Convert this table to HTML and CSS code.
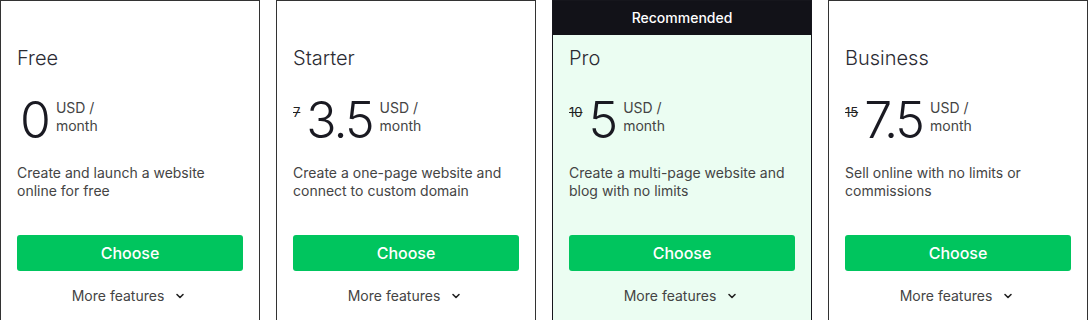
FILE: index.html
```html
<!DOCTYPE html>
<html lang="en">
<head>
    <meta charset="UTF-8">
    <meta name="viewport" content="width=device-width, initial-scale=1.0">
    <title>Plans</title>
    <link rel="stylesheet" href="styles.css">
</head>
<body>
    <div class="plans">
        <div class="plan">
            <div class="badge"></div>
            <div class="plan-body">
                <h2>Free</h2>
                <div class="price">
                    <span class="amount">0</span>
                    <span class="unit">USD /<br>month</span>
                </div>
                <p class="desc">Create and launch a website online for free</p>
                <button class="choose">Choose</button>
                <div class="more">More features <svg width="16" height="16" viewBox="0 0 16 16"><path d="M5 6.5l3 3 3-3" fill="none" stroke="#222" stroke-width="1.6" stroke-linecap="round" stroke-linejoin="round"/></svg></div>
            </div>
        </div>
        <div class="plan">
            <div class="badge"></div>
            <div class="plan-body">
                <h2>Starter</h2>
                <div class="price">
                    <s class="old">7</s>
                    <span class="amount">3.5</span>
                    <span class="unit">USD /<br>month</span>
                </div>
                <p class="desc">Create a one-page website and connect to custom domain</p>
                <button class="choose">Choose</button>
                <div class="more">More features <svg width="16" height="16" viewBox="0 0 16 16"><path d="M5 6.5l3 3 3-3" fill="none" stroke="#222" stroke-width="1.6" stroke-linecap="round" stroke-linejoin="round"/></svg></div>
            </div>
        </div>
        <div class="plan featured">
            <div class="badge">Recommended</div>
            <div class="plan-body">
                <h2>Pro</h2>
                <div class="price">
                    <s class="old">10</s>
                    <span class="amount">5</span>
                    <span class="unit">USD /<br>month</span>
                </div>
                <p class="desc">Create a multi-page website and blog with no limits</p>
                <button class="choose">Choose</button>
                <div class="more">More features <svg width="16" height="16" viewBox="0 0 16 16"><path d="M5 6.5l3 3 3-3" fill="none" stroke="#222" stroke-width="1.6" stroke-linecap="round" stroke-linejoin="round"/></svg></div>
            </div>
        </div>
        <div class="plan">
            <div class="badge"></div>
            <div class="plan-body">
                <h2>Business</h2>
                <div class="price">
                    <s class="old">15</s>
                    <span class="amount">7.5</span>
                    <span class="unit">USD /<br>month</span>
                </div>
                <p class="desc">Sell online with no limits or commissions</p>
                <button class="choose">Choose</button>
                <div class="more">More features <svg width="16" height="16" viewBox="0 0 16 16"><path d="M5 6.5l3 3 3-3" fill="none" stroke="#222" stroke-width="1.6" stroke-linecap="round" stroke-linejoin="round"/></svg></div>
            </div>
        </div>
    </div>
</body>
</html>
```

FILE: styles.css
```css
body {
    margin: 0;
    font-family: Inter, "Noto Sans", sans-serif;
    color: #2b2b33;
    background: #fff;
    overflow: hidden;
}
.plans {
    display: flex;
    gap: 16px;
}
.plan {
    width: 260px;
    height: 320px;
    box-sizing: border-box;
    border: 1px solid #333;
    border-bottom: none;
    background: #fff;
}
.plan.featured {
    background: #ebfdf2;
    border-color: #16161c;
}
.badge {
    height: 34px;
    line-height: 34px;
    text-align: center;
    font-size: 14px;
    font-weight: 500;
    color: #fff;
}
.featured .badge {
    background: #121218;
}
.plan-body {
    padding: 11px 16px 0;
}
.plan-body h2 {
    margin: 0;
    font-size: 20px;
    font-weight: 300;
    line-height: 24px;
    color: #2b2b33;
}
.price {
    display: flex;
    align-items: flex-start;
    margin-top: 25px;
    height: 50px;
}
.old {
    font-size: 13px;
    line-height: 14px;
    margin-top: 10px;
    margin-right: 3px;
    color: #222;
}
.amount {
    font-size: 50px;
    font-weight: 300;
    line-height: 50px;
    letter-spacing: -2px;
    color: #1a1a22;
    margin-left: 3px;
    margin-right: 7px;
}
.unit {
    font-size: 14px;
    line-height: 18px;
    color: #444;
    margin-top: 4px;
}
.desc {
    margin: 19px 0 0;
    font-size: 14px;
    line-height: 18px;
    color: #444;
    height: 36px;
}
.choose {
    display: block;
    width: 100%;
    height: 36px;
    margin-top: 35px;
    border: none;
    border-radius: 3px;
    background: #00c55e;
    color: #fff;
    font-family: inherit;
    font-size: 16px;
    font-weight: 500;
    cursor: pointer;
}
.more {
    display: flex;
    justify-content: center;
    align-items: center;
    gap: 8px;
    margin-top: 16px;
    font-size: 14px;
    color: #444;
}
```
